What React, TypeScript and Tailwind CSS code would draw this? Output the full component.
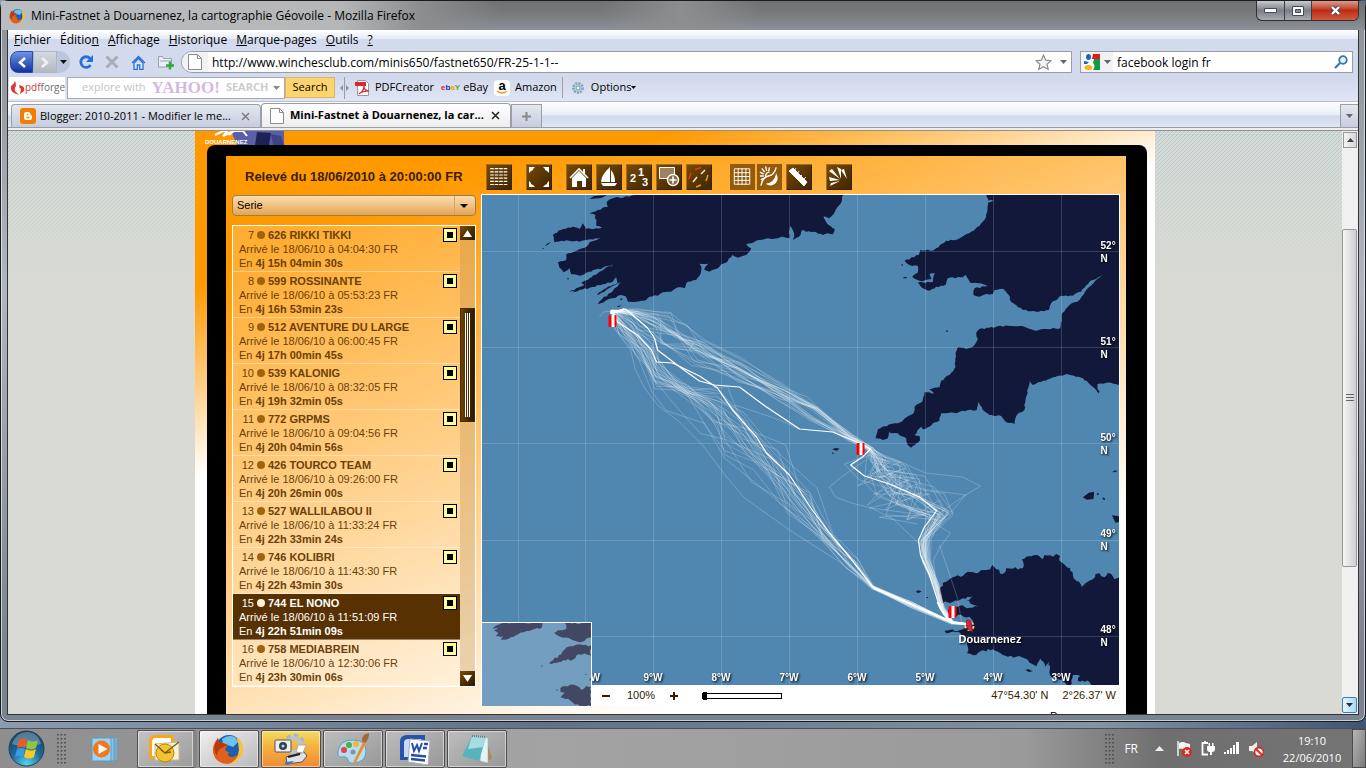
import React from "react";

type Pt = [number, number];

function seeded(seed: number) {
  let s = seed;
  return () => {
    s = (s * 16807) % 2147483647;
    return s / 2147483647 - 0.5;
  };
}

function parse(text: string): Pt[] {
  return text
    .trim()
    .split(/\s+/)
    .map((p) => p.split(",").map(Number) as Pt);
}

/* Breaks every edge of a coast line into small irregular steps. */
function coast(text: string, seed: number, amp = 0.32): string {
  const rnd = seeded(seed);
  const pts = parse(text);
  const out: Pt[] = [];
  pts.forEach((a, i) => {
    const b = pts[(i + 1) % pts.length];
    const len = Math.hypot(b[0] - a[0], b[1] - a[1]);
    out.push(a);
    if (len > 200) return;
    const n = Math.max(1, Math.floor(len / 7));
    for (let k = 1; k < n; k++) {
      const t = k / n;
      const d = rnd() * Math.min(len, 22) * amp;
      out.push([
        a[0] + (b[0] - a[0]) * t - ((b[1] - a[1]) / len) * d,
        a[1] + (b[1] - a[1]) * t + ((b[0] - a[0]) / len) * d,
      ]);
    }
  });
  return out.map((p) => p[0].toFixed(1) + "," + p[1].toFixed(1)).join(" ");
}

const IRELAND = coast(
  "520,110 1120,110 1118,135 1105,155 1092,178 1078,190 1062,184 1072,205 1096,222 1090,238 1075,235 1060,240 1040,232 1010,230 1000,224 988,245 970,255 974,235 962,212 960,250 940,245 925,250 895,250 870,255 845,265 830,268 845,280 830,300 805,308 788,300 775,318 755,328 745,340 720,350 704,344 716,326 690,326 696,336 694,355 680,375 655,380 645,400 625,397 605,410 580,412 565,422 540,425 530,435 500,440 475,440 468,424 455,420 430,430 410,436 385,448 398,432 430,408 455,382 438,390 405,410 382,420 410,400 444,384 440,366 430,380 400,388 360,398 325,408 300,411 320,400 345,390 335,383 355,375 390,350 432,328 400,338 365,350 330,362 305,358 300,340 282,352 270,338 265,322 290,315 290,298 320,288 345,278 360,262 392,248 350,255 330,260 290,256 255,262 250,240 275,225 310,215 330,222 340,205 350,222 380,220 398,218 380,212 378,180 360,175 385,165 415,155 412,140 430,130 480,125",
  7,
  0.22,
);
const BRITAIN = coast(
  "435,36 447,62 468,60 446,68 440,110 420,138 395,155 355,178 320,182 290,205 280,212 243,210 238,225 195,242 210,255 235,258 235,278 218,290 240,302 276,298 270,282 286,280 280,306 235,308 250,325 270,332 290,320 318,315 325,295 370,292 378,284 392,308 430,312 445,318 405,325 402,345 420,350 440,342 460,342 465,330 490,326 508,345 515,365 530,375 550,390 590,395 628,390 635,370 665,347 700,347 725,335 750,305 788,285 770,300 740,330 720,360 690,375 668,400 662,445 620,447 590,452 555,440 505,437 470,440 420,447 410,460 415,478 400,500 380,507 355,502 348,520 348,560 330,585 305,602 300,622 270,628 284,640 255,637 248,665 225,680 222,700 175,730 155,732 115,748 108,775 130,780 145,775 148,757 175,760 200,775 205,795 215,803 242,780 240,768 225,765 245,740 250,748 300,722 305,700 355,698 385,690 412,690 418,665 430,690 450,705 485,708 500,727 525,732 532,705 555,690 558,660 566,625 570,602 580,615 605,605 640,592 682,582 730,595 775,632 774,612 800,608 850,615 850,36",
  11,
  0.2,
);
const BRITTANY = coast(
  "880,400 855,418 845,402 835,398 825,412 810,400 798,402 790,418 775,425 757,440 740,422 730,405 722,385 700,370 690,362 692,348 680,342 670,350 645,345 640,358 620,345 590,350 577,358 580,385 550,386 530,385 520,402 500,388 488,375 482,388 462,390 440,400 415,395 400,408 370,412 340,428 330,450 332,488 370,485 400,475 430,468 410,482 446,500 420,503 400,496 375,505 355,510 362,532 386,524 420,530 432,545 400,568 345,572 350,580 385,575 405,590 415,620 413,640 440,645 455,632 490,628 520,645 560,650 585,655 600,668 622,678 632,655 648,680 660,665 665,710 700,722 722,738 730,705 752,708 745,722 780,726 800,742 880,742",
  23,
  0.4,
);

const LEAD_TRACKS = [
  "965,623 953,623 942,610 938,600 930,575 921,555 919,540 925,527 937,511 920,497 890,484 865,476 851,465 863,457 871,449 855,441 833,432 800,429 767,407 740,387 715,385 700,381 683,369 658,350 655,338 648,328 633,315 626,309 613,312",
  "613,312 618,322 638,335 652,350 657,362 673,363 700,376 718,388 733,410 757,437 767,453 790,475 812,509 830,533 850,557 873,587 913,605 953,623 967,624",
];

const STRAY_TRACKS = [
  "613,325 618,333 631,350 636,370 645,388 658,405 680,422 703,445 727,477 745,498 790,530 840,562 873,588 912,607",
  "872,450 897,460 926,473 963,477 981,486 963,497 940,513 926,530 921,556 939,600",
  "866,460 842,477 830,487 836,497 852,503 872,508 895,520 921,545",
  "872,450 886,470 902,485 930,490 966,495 950,514 932,527 923,545 936,590",
  "868,456 845,464 860,480 888,488 912,500 930,520 951,533 940,548 934,560 937,590",
  "870,452 901,462 867,476 914,478 874,494 930,494 870,508 925,515 880,517 918,524",
  "868,455 890,462 858,486 900,470 868,505 907,480 886,510 922,492 907,520 941,508",
  "872,450 880,478 906,468 890,496 917,484 908,520 940,500 948,514 922,540",
  "735,405 757,412 780,420 800,429",
  "600,317 604,312 612,311 622,312",
  "613,312 640,312 660,320 682,333 694,343 690,350",
  "690,348 735,367 790,390 808,397 830,420 850,436 871,446",
  "940,545 958,598 962,622",
];

type Way = [number, number, number, number];
const OUT: Way[] = [
  [966, 624, 1, 1], [953, 622, 2, 2], [943, 608, 3, 4], [937, 585, 5, 3], [926, 560, 9, 4],
  [925, 540, 12, 6], [941, 515, 26, 10], [915, 500, 60, 26], [900, 487, 60, 26], [886, 473, 46, 20],
  [878, 460, 22, 8], [871, 449, 6, 3], [850, 437, 4, 6], [815, 412, 12, 16], [780, 392, 12, 20], [740, 371, 12, 22],
  [700, 352, 14, 24], [676, 337, 44, 26], [652, 322, 40, 20], [632, 313, 18, 8], [614, 311, 2, 2],
];
const BACK: Way[] = [
  [613, 311, 2, 2], [626, 328, 18, 12], [645, 350, 24, 12], [657, 375, 14, 28], [682, 390, 30, 36],
  [716, 408, 32, 44], [740, 436, 32, 38], [768, 465, 38, 32], [800, 502, 36, 24], [828, 537, 22, 16],
  [852, 563, 14, 12], [873, 587, 3, 3], [912, 605, 5, 5], [953, 623, 3, 2], [967, 624, 1, 1],
];

function track(way: Way[], seed: number): string {
  const rnd = seeded(seed);
  rnd();
  const side = rnd();
  return way
    .map(([x, y, sx, sy]) => {
      const j = side * 0.6;
      const px = x + (j + rnd() * 0.6) * sx;
      const py = y + (-j + rnd() * 0.7) * sy;
      return px.toFixed(1) + "," + py.toFixed(1);
    })
    .join(" ");
}

const FAINT = Array.from({ length: 27 }, (_, i) => [
  track(OUT, 991 + i * 7717),
  track(BACK, 131 + i * 9173),
]).flat();

const MERIDIANS = [518, 585, 653, 721, 789, 857, 925, 993, 1061];
const PARALLELS = [251, 347, 443, 540, 636];

function Buoy({ x, y }: { x: number; y: number }) {
  return (
    <g>
      <rect x={x} y={y} width="8" height="12" rx="1" fill="#f00" />
      <rect x={x + 3} y={y} width="3" height="12" fill="#fff" />
    </g>
  );
}

function SeaMap() {
  return (
    <svg
      viewBox="482 195 638 490"
      preserveAspectRatio="xMidYMid slice"
      className="block h-[490px] w-full bg-[#5087b0]"
      role="img"
      aria-label="Carte de la course"
    >
      <g fill="#12183a">
        <g transform="translate(470 155) scale(.33333)">
          <polygon points={IRELAND} />
          <path d="M360 132l14-9 38-3-16 9zM226 272l10-8 8-2-10 8zM219 280h4v2h-4zM293 370h5v3h-5zM442 455l14-6-8 8zM450 432l8-2v6z" />
        </g>
        <g transform="translate(840 180) scale(.33333)">
          <polygon points={BRITAIN} />
          <path d="M-10 36h20l-5 32-15 12zM186 253h4v4h-4zM192 291h10v4h-10zM321 448l5 8h-5zM770 628l10 4-2 8-6-6z" />
        </g>
        <g transform="translate(830 440) scale(.33333)">
          <polygon points={BRITTANY} />
          <path d="M760 172l18-14 16-3-2 22-20 2zM802 160h6v4h-6zM820 172l7 4-2 5-6-4zM847 226l25 3v16l-14 3zM848 96l10-5 6 3-10 3zM588 690l8-3 14 7-12 2zM258 456l8-5 10 3-8 5zM291 471h4v3h-4zM8 28l10-4 12 2-8 6zM10 36l4 5h-6z" />
        </g>
      </g>
      <g stroke="#fff" strokeOpacity=".16" shapeRendering="crispEdges">
        {MERIDIANS.map((x) => (
          <line key={x} x1={x + 0.5} x2={x + 0.5} y1="195" y2="685" />
        ))}
        {PARALLELS.map((y) => (
          <line key={y} x1="482" x2="1120" y1={y + 0.5} y2={y + 0.5} />
        ))}
      </g>
      <g fill="none" stroke="#fff" strokeLinejoin="round">
        <g strokeOpacity=".22">
          {FAINT.map((p, i) => (
            <polyline key={i} points={p} />
          ))}
          {STRAY_TRACKS.map((p, i) => (
            <polyline key={i} points={p} />
          ))}
        </g>
        {LEAD_TRACKS.map((p) => (
          <polyline key={p} points={p} strokeWidth="1.2" />
        ))}
        <path d="M612 312l8-1 5-2M938 602q6 14 14 20M874 588l40 17 40 18 14 1" strokeWidth="2" />
      </g>
      <circle cx="613" cy="312" r="2.5" fill="#fff" />
      <Buoy x={609} y={315} />
      <Buoy x={857} y={443} />
      <Buoy x={949} y={606} />
      <circle cx="970" cy="626" r="4" fill="none" stroke="#f3d979" strokeWidth="2" strokeDasharray="3 2" />
      <path d="M967 620q4-1 5 3l1 9-4-2q-3-5-2-10z" fill="#cf2840" stroke="#8a1528" strokeWidth=".5" />
      <g
        className="font-['Liberation_Sans',sans-serif] text-[11px] font-bold"
        fill="#fff"
        style={{ filter: "drop-shadow(1px 1px 1px #000)" }}
      >
        {[52, 51, 50, 49, 48].map((n, i) => (
          <text key={n} className="text-[10px]">
            <tspan x="1101" y={249 + i * 96}>{n}°</tspan>
            <tspan x="1101" y={262 + i * 96}>N</tspan>
          </text>
        ))}
        {["10°W", "9°W", "8°W", "7°W", "6°W", "5°W", "4°W", "3°W"].map((l, i) => (
          <text key={l} x={576 + i * 68} y="681" className="text-[10px]">
            {l}
          </text>
        ))}
        <text x="959" y="643">Douarnenez</text>
      </g>
    </svg>
  );
}

function MiniMap() {
  return (
    <svg
      viewBox="876 188 328 250"
      preserveAspectRatio="none"
      className="absolute bottom-0 left-px block h-[84px] w-[110px] border-t border-r border-white bg-[#739ebf]"
      aria-hidden="true"
    >
      <g fill="#424764">
        <polygon points={coast("938,188 1058,188 1056,202 1035,206 1010,212 985,222 950,238 932,238 940,228 918,228 925,218 912,210 925,202 908,205 920,195", 5, 0.2)} />
        <polygon points={coast("1126,188 1204,188 1204,232 1190,235 1170,246 1150,240 1130,232 1108,228 1093,218 1105,210 1130,205", 9, 0.3)} />
        <polygon points={coast("1204,256 1180,254 1150,258 1130,262 1115,282 1090,300 1078,310 1100,308 1120,300 1150,298 1165,282 1185,280 1204,286", 13, 0.3)} />
        <polygon points={coast("1204,380 1190,378 1175,390 1160,376 1140,374 1112,384 1112,396 1125,398 1112,412 1135,416 1150,428 1170,438 1204,438", 17, 0.3)} />
        <path d="M1054 316h4v3h-4zM1100 388h4v3h-4zM1186 342h5v3h-5zM1200 355h4v6h-4z" />
      </g>
    </svg>
  );
}

const ICONS: { name: string; gap: string; flat?: boolean; art: React.ReactNode }[] = [
  {
    name: "Classement", gap: "",
    art: <path d="M6 4v17M10.500 4v17M15 4v17M19.500 4v17" stroke="#fff" strokeWidth="3.600" strokeDasharray="1.200 2" />,
  },
  {
    name: "Plein écran", gap: "ml-3.5",
    art: <path d="M3 3h6L7 5v1L5 7 3 9zM23 3h-6l2 2v1l2 1 2 2zM3 23v-6l2 2v1l2 1 2 2zM23 23v-6l-2 2v1l-2 1-2 2z" fill="#fff" />,
  },
  {
    name: "Accueil", gap: "ml-3.5",
    art: (
      <g>
        <path d="M17 5h2v5h-2z" fill="#fff" />
        <path d="M4 14l9-9 9 9" fill="none" stroke="#fff" strokeWidth="1.6" />
        <path d="M6 14l7-7 7 7v9h-4v-6h-5v6H6z" fill="#fff" />
      </g>
    ),
  },
  {
    name: "Bateaux", gap: "ml-1",
    art: <path d="M14 3q-9 8-9 15h9zM15 6v12h4q0-7-4-12zM5 19h16l-2 3H7z" fill="#fff" />,
  },
  {
    name: "Numéros", gap: "ml-1",
    art: (
      <g fill="#fff" className="font-['Liberation_Sans',sans-serif] text-[11px] font-bold">
        <text x="4" y="18">2</text>
        <text x="12" y="12">1</text>
        <text x="16" y="22">3</text>
      </g>
    ),
  },
  {
    name: "Zoom sur zone", gap: "ml-1",
    art: (
      <g stroke="#fff">
        <path d="M3.500 3.500h15v11h-15z" fill="#9c8162" />
        <circle cx="17" cy="16" r="5.500" fill="#8a6d48" strokeWidth="1.400" />
        <path d="M17 12.500v7M13.500 16h7" strokeWidth="1.600" />
      </g>
    ),
  },
  {
    name: "Traces", gap: "ml-1",
    art: (
      <g strokeWidth="1.500" fill="none">
        <path d="M9 5.500l6-2M3 15l2-6" stroke="#e4391a" />
        <path d="M7 18l4-5M15 10l4-4" stroke="#f0e8dc" />
        <path d="M20 17l2-6M10 23l5-2" stroke="#d9a51e" />
      </g>
    ),
  },
  {
    name: "Grille", gap: "ml-[18px]", flat: true,
    art: <path d="M4.500 4.500h16v16h-16zM8.500 4v17M12.500 4v17M16.500 4v17M4 8.500h17M4 12.500h17M4 16.500h17" fill="none" stroke="#fff" />,
  },
  {
    name: "Jour et nuit", gap: "ml-0.5", flat: true,
    art: (
      <g stroke="#fff" fill="none" strokeWidth="1.400">
        <path d="M20 3q-2 8-8 9T4 22" />
        <path d="M9 13a4 4 0 0 1 4-5M3 8l4 2M5 4l3 4M9 2l1 5M3 12h4M13 3l-1 4M4 16l3-2" />
        <path d="M20 9q4 8-3 12-4 2-8-1 9-1 11-11z" fill="#fff" stroke="none" />
      </g>
    ),
  },
  {
    name: "Mesure", gap: "ml-1",
    art: <path d="M3 7l4-3 14 14-3 4zM8 7l2-3M11 10l2-3M14 13l2-2M17 16l3-3" fill="#fff" stroke="#fff" strokeWidth=".9" />,
  },
  {
    name: "Vent", gap: "ml-3.5",
    art: <path d="M11 3l4 2v10zM3 7l3-2 8 10zM3 13l11 3-10 1zM18 5l3 10-6-9zM4 22l10-5-9 2z" fill="#fff" />,
  },
];

const BOATS = [
  ["7", "626 RIKKI TIKKI", "04:04:30", "4j 15h 04min 30s"],
  ["8", "599 ROSSINANTE", "05:53:23", "4j 16h 53min 23s"],
  ["9", "512 AVENTURE DU LARGE", "06:00:45", "4j 17h 00min 45s"],
  ["10", "539 KALONIG", "08:32:05", "4j 19h 32min 05s"],
  ["11", "772 GRPMS", "09:04:56", "4j 20h 04min 56s"],
  ["12", "426 TOURCO TEAM", "09:26:00", "4j 20h 26min 00s"],
  ["13", "527 WALLILABOU II", "11:33:24", "4j 22h 33min 24s"],
  ["14", "746 KOLIBRI", "11:43:30", "4j 22h 43min 30s"],
  ["15", "744 EL NONO", "11:51:09", "4j 22h 51min 09s"],
  ["16", "758 MEDIABREIN", "12:30:06", "4j 23h 30min 06s"],
];

function BoatList() {
  return (
    <div className="mt-[9px] flex h-[462px] overflow-hidden border border-white bg-white/20">
      <ul className="flex-1 overflow-hidden">
        {BOATS.map(([rank, name, time, total]) => {
          const on = rank === "15";
          return (
            <li
              key={rank}
              className={
                on
                  ? "flex h-[46px] border-b border-white/40 bg-[#583103] pt-0.5 text-white"
                  : "flex h-[46px] border-b border-white/40 pt-0.5 text-[#6b3f08]"
              }
            >
              <label htmlFor={"boat" + rank} className="flex-1 text-[11px] leading-[14px]">
                <span className="flex items-center">
                  <span className="w-[21px] text-right">{rank}</span>
                  <i className={on ? "mx-[3px] size-2 rounded-full bg-[#fff0da]" : "mx-[3px] size-2 rounded-full bg-[#a0620c]"} />
                  <b>{name}</b>
                </span>
                <span className="block pl-1.5">Arrivé le 18/06/10 à {time} FR</span>
                <span className="block pl-1.5">
                  En <b>{total}</b>
                </span>
              </label>
              <input
                id={"boat" + rank}
                type="checkbox"
                defaultChecked
                className="mr-[3px] size-3.5 appearance-none border border-black bg-[#ffff99] bg-[linear-gradient(#000,#000)] bg-[length:6px_6px] bg-center bg-no-repeat"
              />
            </li>
          );
        })}
      </ul>
      <div className="flex w-[15px] flex-col bg-[#b98b4c]/30">
        <button aria-label="Monter" className="flex h-3.5 items-center justify-center bg-linear-to-br from-[#7c4c08] to-[#2c1800]">
          <svg width="9" height="7"><path d="M4.500 0L9 7H0z" fill="#fff" /></svg>
        </button>
        <div className="mt-[68px] flex h-[114px] justify-center gap-px border border-[#4a2b00] bg-linear-to-r from-[#6e4300] to-[#2c1800] py-1">
          <i className="w-px bg-white" />
          <i className="w-px bg-white" />
          <i className="w-px bg-white" />
        </div>
        <button aria-label="Descendre" className="mt-auto flex h-[15px] items-center justify-center bg-linear-to-br from-[#7c4c08] to-[#2c1800]">
          <svg width="9" height="7"><path d="M4.500 7L9 0H0z" fill="#fff" /></svg>
        </button>
      </div>
    </div>
  );
}

function Viewer() {
  return (
    <div className="min-h-[600px] bg-[linear-gradient(158deg,#ff9900_102px,#fff_680px)] px-1.5 pt-2 font-['Liberation_Sans',sans-serif]">
      <div className="flex">
        <div className="flex w-[244px] flex-none flex-col">
          <h1 className="h-[31px] pt-1 pl-[13px] text-[13px] leading-[18px] font-bold whitespace-nowrap text-[#3a2000]">
            Relevé du 18/06/2010 à 20:00:00 FR
          </h1>
          <div className="relative flex">
            <select
              aria-label="Classe"
              defaultValue="Serie"
              className="h-[21px] w-full appearance-none rounded-sm border border-[#9a7d55] bg-linear-to-b from-[#fbdcb0] to-[#e5a550] px-1 text-[11px] text-black"
            >
              <option>Serie</option>
            </select>
            <span className="pointer-events-none absolute inset-y-px right-1 flex w-[18px] items-center justify-center border-l border-[#c9a878]">
              <svg width="8" height="4"><path d="M0 0h8L4 4z" /></svg>
            </span>
          </div>
          <BoatList />
        </div>
        <div className="ml-[5px] flex min-w-0 flex-1 flex-col">
          <div className="flex h-[30px] items-start pl-[5px]">
            {ICONS.map((ic) => (
              <button key={ic.name} aria-label={ic.name} className={ic.gap}>
                <svg
                  width={ic.flat ? 25 : 26}
                  height="26"
                  viewBox="0 0 26 26"
                  className={
                    ic.flat
                      ? "block bg-[#925a0a]"
                      : "block bg-linear-to-br from-[#7b4c07] to-[#3d2400] shadow-[inset_1px_1px_#a26c1d,inset_-1px_-1px_#3b2200]"
                  }
                >
                  {ic.art}
                </svg>
              </button>
            ))}
          </div>
          <div className="relative">
            <div className="border border-b-0 border-white">
              <SeaMap />
            </div>
            <MiniMap />
            <div className="flex h-[21px] items-center bg-white pr-1 pl-[121px] text-[11px] text-[#331c00]">
              <button aria-label="Dézoomer" className="h-0.5 w-2 bg-[#331c00]" />
              <span className="ml-[17px] w-8">100%</span>
              <button aria-label="Zoomer" className="ml-[11px]">
                <svg width="8" height="8"><path d="M0 4h8M4 0v8" stroke="#331c00" strokeWidth="2" /></svg>
              </button>
              <input
                type="range"
                aria-label="Niveau de zoom"
                defaultValue={0}
                className="ml-6 h-1.5 w-20 appearance-none border border-black bg-white [&::-webkit-slider-thumb]:h-2 [&::-webkit-slider-thumb]:w-1 [&::-webkit-slider-thumb]:appearance-none [&::-webkit-slider-thumb]:bg-black"
              />
              <span className="ml-auto">47°54.30&apos; N</span>
              <span className="ml-3.5">2°26.37&apos; W</span>
            </div>
          </div>
          <p className="pt-0.5 pl-[569px] text-[11px] text-black">P</p>
        </div>
      </div>
    </div>
  );
}

function Page() {
  return (
    <main className="flex-1 overflow-hidden bg-[#d8dad3] bg-[linear-gradient(to_bottom,transparent,#d8dad3_150px),linear-gradient(135deg,#b9c4c2_12.5%,#d3dbd9_12.5%,#d3dbd9_50%,#b9c4c2_50%,#b9c4c2_62.5%,#d3dbd9_62.5%)] bg-[length:100%_100%,4px_4px]">
      <div className="mx-auto w-[960px] max-w-full bg-[linear-gradient(162deg,#ff9900_149px,#fff_330px)]">
        <svg width="90" height="14" viewBox="0 0 90 14" className="block" aria-hidden="true">
          <path d="M36 0h53v14H42z" fill="#5a5fa8" />
          <path d="M62 1l14 1-2 12H60z" fill="#1d2354" />
          <path d="M76 3l10 2 3 9H78z" fill="#3d4388" />
          <path d="M20 4l8-4h4l-4 5 10-5h10l4 5M34 4l5-4" stroke="#fff" strokeWidth="2" fill="none" />
          <text x="10" y="13" fill="#fff" className="font-['Liberation_Sans',sans-serif] text-[6px] font-bold">DOUARNENEZ</text>
        </svg>
        <div className="mr-2 ml-3 rounded-t-lg bg-black pt-[11px] pr-[21px] pl-[19px]">
          <Viewer />
        </div>
      </div>
    </main>
  );
}

function Firefox({ size }: { size: number }) {
  return (
    <svg width={size} height={size} viewBox="0 0 32 32" aria-hidden="true" className="flex-none">
      <circle cx="17" cy="15" r="13" fill="#1d5fae" />
      <path d="M10 6q6-5 13-2l3 5-5 5-5-2-4 3z" fill="#6fc1ee" />
      <path d="M24 4q9 6 7 15-3 10-14 12 9-5 10-14 0-7-3-13z" fill="#f8c33a" />
      <path d="M27 20q-3 9-11 11Q4 31 1 20 0 11 6 5l1 4 4 1 5 2-3 4q0 2 4 3-3 4 2 5 6 0 8-4z" fill="#e0601a" />
      <path d="M6 5l1 4 4 1 5 2-4 2q-7 2-7 9-5-7-1-14z" fill="#b83a12" />
    </svg>
  );
}

function Doc() {
  return (
    <svg width="14" height="16" viewBox="0 0 14 16" aria-hidden="true" className="flex-none">
      <path d="M.5.5h9l4 4v11H.5zM9.500.500v4h4" fill="#fdfdfd" stroke="#8d8d8d" />
    </svg>
  );
}

function Caret({ color = "#666" }: { color?: string }) {
  return (
    <svg width="7" height="4" aria-hidden="true" className="flex-none">
      <path d="M0 0h7L3.500 4z" fill={color} />
    </svg>
  );
}

function TitleBar() {
  return (
    <header className="flex h-[29px] items-start bg-linear-to-b from-[#6f7072] via-[#7b7c7d] to-[#8a929b]">
      <div className="flex h-full min-w-0 flex-1 items-center gap-1.5 bg-[linear-gradient(90deg,#b9bdc1_0,#b5b6b7_340px,#8c8d8e_420px,transparent_500px,transparent_600px,#8d8e8f_680px,transparent_760px)] pl-2">
        <Firefox size={16} />
        <span className="whitespace-nowrap text-[12px]">Mini-Fastnet à Douarnenez, la cartographie Géovoile - Mozilla Firefox</span>
      </div>
      <div className="mr-1.5 flex h-5 overflow-hidden rounded-b-md border border-t-0 border-[#2c2f33] bg-linear-to-b from-[#c9cbcd] via-[#7c8086] to-[#a9adb2]">
        <button aria-label="Réduire" className="flex w-7 items-center justify-center border-r border-[#3c3f43]">
          <svg width="13" height="6"><path d="M.5.5h12v4H.5z" fill="#fff" stroke="#444a5c" /></svg>
        </button>
        <button aria-label="Agrandir" className="flex w-[27px] items-center justify-center border-r border-[#3c3f43]">
          <svg width="12" height="10"><path d="M.5.5h11v9H.5z" fill="#fff" stroke="#444a5c" /><path d="M3.500 3.500h5v3h-5z" fill="#8b8e93" stroke="#444a5c" /></svg>
        </button>
        <button aria-label="Fermer" className="flex w-[46px] items-center justify-center bg-linear-to-b from-[#d99a8c] via-[#bb2c12] to-[#d2593e]">
          <svg width="13" height="11" viewBox="0 0 13 11"><path d="M3 2l7 7M10 2l-7 7" stroke="#444a5c" strokeWidth="4.500" /><path d="M3 2l7 7M10 2l-7 7" stroke="#fff" strokeWidth="2.400" /></svg>
        </button>
      </div>
    </header>
  );
}

const MENUS = [["", "F", "ichier"], ["Éditio", "n", ""], ["", "A", "ffichage"], ["", "H", "istorique"], ["", "M", "arque-pages"], ["", "O", "utils"], ["", "?", ""]];

function Chrome() {
  return (
    <div className="text-[12px]">
      <div className="bg-[linear-gradient(#fff_0,#e3ebf7_9px,#d3daed_9px,#d3daed_50px,#e0e6f5_72px)]">
        <nav className="flex h-5 items-center gap-[9px] pl-1.5">
          {MENUS.map(([a, k, b]) => (
            <a key={a + k} href="#menu" className="whitespace-nowrap">
              {a}<u>{k}</u>{b}
            </a>
          ))}
        </nav>
        <div className="flex h-6 items-center">
          <div className="ml-0.5 flex h-[22px] items-center rounded-l-xl rounded-r-xl bg-[#bcc5dc]">
            <button aria-label="Précédent" className="flex h-[22px] w-[23px] items-center justify-center rounded-l-lg border border-[#2a4da8] bg-linear-to-b from-[#6f92e6] to-[#1233a0]">
              <svg width="10" height="11"><path d="M8 1L3 5.500 8 10" stroke="#fff" strokeWidth="2.500" fill="none" /></svg>
            </button>
            <button aria-label="Suivant" className="flex h-[22px] w-6 items-center justify-center border border-[#b0b5c2] bg-linear-to-b from-[#d6d9e0] to-[#b4b8c2]">
              <svg width="10" height="11"><path d="M2 1l5 4.500L2 10" stroke="#eef0f4" strokeWidth="2.500" fill="none" /></svg>
            </button>
            <button aria-label="Pages récentes" className="px-[3px]"><Caret color="#111" /></button>
          </div>
          <button aria-label="Actualiser" className="ml-2">
            <svg width="16" height="16" viewBox="0 0 16 16"><path d="M12.500 11A5.300 5.300 0 1 1 12 4.500" fill="none" stroke="#2372dc" strokeWidth="2.800" /><path d="M15 1v7H8z" fill="#2372dc" /></svg>
          </button>
          <button aria-label="Arrêter" className="ml-[11px]">
            <svg width="14" height="14"><path d="M1.500 1.500l11 11M12.500 1.500l-11 11" stroke="#a9adb6" strokeWidth="3" /></svg>
          </button>
          <button aria-label="Accueil" className="ml-3">
            <svg width="15" height="15" viewBox="0 0 15 15"><path d="M1 8l6.500-6.500L14 8M3 8v6.300h3.300V10h2.500v4.300H12V8L7.500 3.500z" fill="#dce9fb" stroke="#2c6fd6" strokeWidth="1.300" /></svg>
          </button>
          <button aria-label="Nouvel onglet" className="ml-[11px]">
            <svg width="17" height="16" viewBox="0 0 17 16"><path d="M1.500 13V2.500h4l1 2h8V13z" fill="#e9eef8" stroke="#98a1b4" /><path d="M3 7h11" stroke="#98a1b4" /><path d="M9 11.500h8M13 7.500v8" stroke="#35a83a" strokeWidth="2.400" /></svg>
          </button>
          <div className="ml-[7px] flex h-[22px] flex-1 items-center rounded-l-xl border border-[#9a9da3] bg-white">
            <span className="flex h-full w-[26px] items-center justify-end rounded-l-xl bg-[#f1f2f4] pr-1.5"><Doc /></span>
            <input aria-label="Adresse" defaultValue="http://www.winchesclub.com/minis650/fastnet650/FR-25-1-1--" className="ml-1 h-full min-w-0 flex-1 outline-none" />
            <button aria-label="Marquer cette page">
              <svg width="17" height="17" viewBox="0 0 17 17"><path d="M8.500 1.300l2.200 4.900 5.300.5-4 3.500 1.200 5.200-4.700-2.700-4.700 2.700L5 10.200 1 6.700l5.300-.5z" fill="#f4f4f4" stroke="#8b8b8b" strokeWidth="1.200" /></svg>
            </button>
            <button aria-label="Historique des adresses" className="mr-1 ml-2"><Caret /></button>
          </div>
          <div className="mr-[5px] ml-2 flex h-[22px] w-[273px] items-center border border-[#9a9da3] bg-white">
            <button aria-label="Moteur de recherche" className="flex h-full w-8 items-center gap-1 bg-[#f1f2f4] pl-[3px]">
              <svg width="16" height="16" viewBox="0 0 16 16" className="flex-none"><path d="M0 0h16v16H0z" fill="#fff" /><path d="M9 0h7v5H8z" fill="#e9161c" /><path d="M10 5h6v11H9q3-4 0-7z" fill="#0f9a48" /><ellipse cx="4.500" cy="3" rx="2.500" ry="3" fill="#1763c6" /><path d="M0 7l5 1-2 2H0z" fill="#1763c6" /><ellipse cx="4.500" cy="13.500" rx="4" ry="2.500" fill="#f5b51b" /></svg>
              <Caret />
            </button>
            <input aria-label="Rechercher" defaultValue="facebook login fr" className="ml-1 h-full min-w-0 flex-1 outline-none" />
            <button aria-label="Lancer la recherche" className="mr-1">
              <svg width="14" height="14"><circle cx="9" cy="5" r="3.800" fill="#e7f2fb" stroke="#3475b5" strokeWidth="1.800" /><path d="M6 8l-5 5" stroke="#3475b5" strokeWidth="2.200" /></svg>
            </button>
          </div>
        </div>
        <div className="flex h-[28px] items-center border-b border-[#b9bdc9] text-[11px]">
          <span className="ml-[1px] flex h-[22px] w-[56px] flex-none items-center overflow-hidden bg-white pl-px text-[10px] text-[#6d6e70]">
            <svg width="15" height="16" viewBox="0 0 15 16" className="flex-none"><path d="M5 1q-1 3-4 5-1 5 3 7l5 2-4-4q-1-3 1-5 0-3-1-5zM9 5q0 3 2 4l-1 5 4-3q1-4-2-5z" fill="#dd3a34" /></svg>
            <b className="font-normal text-[#c5403c]">pdf</b>forge
          </span>
          <label className="ml-0.5 flex h-[22px] w-[218px] items-center border border-[#a6a9b0] bg-white text-[#c4c4c4]">
            <span className="ml-3.5 whitespace-nowrap">explore with</span>
            <b className="ml-1.5 font-['Liberation_Serif',serif] text-[17px] text-[#d3b9de]">YAHOO!</b>
            <b className="ml-1.5 text-[#cccccc]">SEARCH</b>
            <input aria-label="Recherche Yahoo" className="w-0 flex-1 outline-none" />
            <span className="mr-1"><Caret color="#888" /></span>
          </label>
          <button className="h-[21px] w-[50px] border border-[#d9b75c] bg-[#fcd46f]">Search</button>
          <svg width="9" height="22" className="ml-[5px]"><path d="M4.500 0v22" stroke="#999ca6" /><path d="M3 8v6L0 11zM6 8v6l3-3z" fill="#8a8d96" /></svg>
          <svg width="16" height="16" viewBox="0 0 16 16" className="ml-1.5"><path d="M2.500.500h8l3 3v12h-11z" fill="#fff" stroke="#999" /><path d="M0 2h11v4H0z" fill="#e0252a" /><path d="M4 14q5-3 5-8 0 5 5 5-7 0-10 3z" fill="none" stroke="#d62125" strokeWidth="1.200" /></svg>
          <a href="#pdf" className="ml-1">PDFCreator</a>
          <span className="ml-[7px] font-['Liberation_Sans',sans-serif] text-[8px] leading-none font-bold"><i className="not-italic text-[#e4191e]">e</i><i className="not-italic text-[#1b32b8]">b</i><i className="not-italic text-[#e0b000]">a</i><i className="not-italic text-[#62a80e]">Y</i></span>
          <a href="#ebay" className="ml-[3px]">eBay</a>
          <span className="ml-1.5 flex size-4 flex-col items-center rounded-sm bg-white font-['Liberation_Sans',sans-serif] text-[13px] leading-[11px] font-black">
            a
            <svg width="12" height="4"><path d="M1 0q5 4 10 0" fill="none" stroke="#f29a1f" strokeWidth="1.500" /></svg>
          </span>
          <a href="#amazon" className="ml-[5px]">Amazon</a>
          <i className="ml-[5px] h-[21px] w-px bg-[#9da1ad]" />
          <svg width="14" height="14" viewBox="0 0 14 14" className="ml-2"><circle cx="7" cy="7" r="4.500" fill="#c5dbe8" stroke="#87a9bf" strokeWidth="3" strokeDasharray="2 1" /><circle cx="7" cy="7" r="2" fill="#eef6fa" stroke="#7797ad" /></svg>
          <button className="ml-1.5 flex items-center">Options<svg width="5" height="3"><path d="M0 0h5L2.500 3z" /></svg></button>
        </div>
      </div>
      <div className="flex h-[26px] items-end border-b border-[#9b9ea4] bg-[linear-gradient(#fff_0,#e8edf8_13px,#d0d8ed_14px,#e2e8f4_26px)] pl-[3px] text-[11px]" role="tablist">
        <button role="tab" aria-selected="false" className="flex h-[23px] w-[250px] items-center rounded-t-sm border border-b-0 border-[#9b9ea4] bg-linear-to-b from-[#e3e7f1] to-[#c6cde0] pl-2">
          <svg width="16" height="16" viewBox="0 0 16 16" className="flex-none"><rect width="16" height="16" rx="3" fill="#f57d00" /><path d="M6.500 4h2q2 0 2 2.500 0 1 1.500 1v2q0 2.500-2.500 2.500h-3Q4 12 4 9.500v-3Q4 4 6.500 4z" fill="#fff" /><path d="M6.500 6.500H8M6.500 9.500h3" stroke="#f57d00" strokeWidth="1.300" /></svg>
          <span className="ml-1 flex-1 text-left whitespace-nowrap">Blogger: 2010-2011 - Modifier le me...</span>
          <svg width="9" height="9" className="mr-2.5 flex-none"><path d="M1 1l7 7M8 1L1 8" stroke="#777" strokeWidth="1.400" /></svg>
        </button>
        <button role="tab" aria-selected="true" className="flex h-6 w-[250px] items-center rounded-t-sm border border-b-0 border-[#9b9ea4] bg-linear-to-b from-white to-[#ededed] pl-2 font-bold">
          <Doc />
          <span className="ml-1.5 flex-1 text-left whitespace-nowrap">Mini-Fastnet à Douarnenez, la car...</span>
          <svg width="9" height="9" className="mr-2.5 flex-none"><path d="M1 1l7 7M8 1L1 8" stroke="#222" strokeWidth="1.500" /></svg>
        </button>
        <button aria-label="Ouvrir un nouvel onglet" className="flex h-[23px] w-[31px] items-center justify-center border border-b-0 border-[#9b9ea4] bg-linear-to-b from-[#e3e7f1] to-[#c6cde0]">
          <svg width="9" height="9"><path d="M0 4.500h9M4.500 0v9" stroke="#888" strokeWidth="2" /></svg>
        </button>
        <button aria-label="Liste des onglets" className="ml-auto flex h-[23px] w-[18px] items-center justify-center border border-r-0 border-b-0 border-[#9b9ea4] bg-linear-to-b from-[#e3e7f1] to-[#c6cde0]"><Caret /></button>
      </div>
      <div className="h-[3px] border-b border-[#8e9094] bg-[#ededed]" />
    </div>
  );
}

function Scrollbar() {
  return (
    <div className="flex w-4 flex-col bg-[#f0f0f0]">
      <button aria-label="Défiler vers le haut" className="m-px flex h-4 items-center justify-center border border-[#979797] bg-linear-to-r from-[#f5f5f5] to-[#d5d5d8]">
        <svg width="7" height="4"><path d="M3.500 0L7 4H0z" fill="#444" /></svg>
      </button>
      <div className="min-h-[80px] flex-1" />
      <div className="flex h-[338px] w-[15px] flex-none flex-col items-center justify-center gap-0.5 rounded-xs border border-[#979797] bg-linear-to-r from-[#f6f6f6] to-[#cfcfd3]">
        <i className="h-px w-2 bg-[#666]" /><i className="h-px w-2 bg-[#666]" /><i className="h-px w-2 bg-[#666]" />
      </div>
      <div className="h-[130px] flex-none" />
      <button aria-label="Défiler vers le bas" className="mb-px flex h-[17px] w-[15px] items-center justify-center rounded-xs border border-[#3c7fb1] bg-linear-to-r from-[#e6f5fd] to-[#a9daf2]">
        <svg width="7" height="4"><path d="M3.500 4L7 0H0z" fill="#234" /></svg>
      </button>
    </div>
  );
}

const TASKS: { name: string; lit: string; art: React.ReactNode }[] = [
  {
    name: "Outlook", lit: "ml-[18px] w-[60px] bg-linear-to-br from-[#c4c4c4] to-[#9b9b9b] border-r-4 border-r-[#858585] pr-1",
    art: <g><path d="M2 26V8q0-6 6-6h19v24z" fill="#f9a61c" /><path d="M5 23V9q0-4 4-4h15v18z" fill="#fff" /><path d="M8 11l24-2v18H8z" fill="#f6f0de" stroke="#c9b98a" /><circle cx="18" cy="20" r="9" fill="#f4c430" stroke="#b98609" /><path d="M8 11l10 9 14-11M18 20l-4-3M18 20l6-1" fill="none" stroke="#7b5a0a" strokeWidth="1.300" /></g>,
  },
  { name: "Firefox", lit: "ml-0.5 w-[60px] bg-linear-to-br from-[#f0f0f0] to-[#b9b9bd]", art: <Firefox size={32} /> },
  {
    name: "Appareil et imprimante", lit: "ml-0.5 w-[60px] bg-[linear-gradient(#f3dc62,#f5b13c_45%,#ee8a3a)]",
    art: <g><circle cx="20" cy="12" r="9" fill="none" stroke="#a9b6c0" strokeWidth="5" strokeDasharray="4 3" /><circle cx="20" cy="12" r="7" fill="none" stroke="#b9c5ce" strokeWidth="4" /><rect x="1" y="7" width="16" height="12" rx="1" fill="#eef0f2" stroke="#555" /><circle cx="9" cy="13" r="4" fill="#36414c" /><circle cx="9" cy="13" r="1.500" fill="#b6dcf3" /><path d="M12 24l18-5 3 4-5 6-15 2z" fill="#dfe3e7" stroke="#555" /><path d="M14 24l12-3" stroke="#222" strokeWidth="2" /><path d="M22 19l2-7h8l-3 8z" fill="#fff" stroke="#aaa" /><path d="M11 29l9-1-3 3-6 1z" fill="#3c7fc0" /></g>,
  },
  {
    name: "Paint", lit: "ml-0.5 w-[60px] bg-linear-to-br from-[#bdbdbd] to-[#989898]",
    art: <g><path d="M2 18Q4 7 17 7t13 11-12 12q-5 1-6-3t-6-3-4-6z" fill="#b8dcf0" stroke="#5c9dc2" /><circle cx="8" cy="17" r="3" fill="#e5443b" /><circle cx="13" cy="12" r="3" fill="#4fae48" /><circle cx="20" cy="11" r="3" fill="#f2b632" /><circle cx="17" cy="19" r="2.500" fill="#7696ad" /><path d="M27 9l3 1-11 21-2-1z" fill="#ee8c2d" /><path d="M26 8q-1-6 7-8 0 7-4 10z" fill="#a8672f" /></g>,
  },
  {
    name: "Word", lit: "ml-0.5 w-[60px] bg-linear-to-br from-[#bdbdbd] to-[#989898]",
    art: <g><path d="M2 27V9q0-7 7-7h18v25z" fill="#2853ad" /><path d="M6 24V10q0-4 4-4h13v18z" fill="#c9daf5" /><path d="M12 6l20 2-2 24-20-3z" fill="#fff" stroke="#aab" /><path d="M14 10l2 8 3-6 2 6 3-8" fill="none" stroke="#2450a8" strokeWidth="2" /><path d="M26 11h4M25 15h4M13 22l15 1.500M13 26l14 1.500" stroke="#2450a8" strokeWidth="2.300" /></g>,
  },
  {
    name: "Bloc-notes", lit: "ml-0.5 w-[60px] bg-linear-to-br from-[#bdbdbd] to-[#989898]",
    art: <g><path d="M25 4l7 21-4 3-5-2z" fill="#a9895a" /><path d="M22 3l6 2v25l-8-2z" fill="#e6f3f5" stroke="#9ab" strokeWidth=".6" /><path d="M12 3l14 1-7 24-17-5z" fill="#57b3bf" /><path d="M12 3l14 1-3 10-15 2z" fill="#a5dde2" /><path d="M12 3l14 1" stroke="#777" strokeWidth="2" strokeDasharray="1 1" /></g>,
  },
];

function Grip() {
  return (
    <svg width="9" height="32" aria-hidden="true">
      <path d="M1 1v30M4.500 1v30M8 1v30" stroke="#444" strokeWidth="1.500" strokeDasharray="1.500 2.500" />
    </svg>
  );
}

function Taskbar() {
  return (
    <footer className="flex h-10 flex-none items-center border-t border-[#4c4f54] bg-[linear-gradient(90deg,#8e8e8e,#a3a3a3_40%,#9a9a9a_75%,#6f6f6f_85%,#747474)] font-['Open_Sans','Noto_Sans',sans-serif]">
      <button aria-label="Démarrer" className="ml-2">
        <svg width="37" height="37" viewBox="0 0 37 37">
          <defs>
            <radialGradient id="orb" cx=".5" cy=".95" r=".9"><stop offset="0" stopColor="#4fd8f5" /><stop offset=".5" stopColor="#1e6a9e" /><stop offset="1" stopColor="#134268" /></radialGradient>
          </defs>
          <circle cx="18.500" cy="18.500" r="17.500" fill="url(#orb)" stroke="#2c3e4c" />
          <path d="M4 14Q8 2 19 2t14 12q-14 5-29 0z" fill="#fff" opacity=".28" />
          <path d="M11 10q4-3 8 0l-2 8q-4-2-8 0z" fill="#ee5a25" />
          <path d="M20 10q5 3 10 0l-2 8q-5 3-10 0z" fill="#8dc63f" />
          <path d="M9 19q4-2 8 0l-2 8q-4-3-8 0z" fill="#3a9be0" />
          <path d="M18 19q5 3 10 0l-2 8q-5 3-10 0z" fill="#fcc723" />
        </svg>
      </button>
      <span className="ml-3"><Grip /></span>
      <button aria-label="Lecteur multimédia" className="ml-[25px]">
        <svg width="28" height="26" viewBox="0 0 28 26"><path d="M6 2h20v22H6z" fill="#6fb0d8" /><path d="M3 2h20v23H3z" fill="#8cc4e6" stroke="#5b9cc6" /><path d="M1 2h19v23H1z" fill="#9fd2ef" stroke="#5b9cc6" /><circle cx="10.500" cy="13" r="8.500" fill="#f0791c" /><path d="M7.500 8l9 5-9 5z" fill="#fff" /></svg>
      </button>
      {TASKS.map((t) => (
        <button key={t.name} aria-label={t.name} className={"flex h-[38px] items-center justify-center rounded-xs border border-[#4e4e4e] inset-ring inset-ring-white/50 " + t.lit}>
          <svg width="34" height="32" viewBox="0 0 34 32">{t.art}</svg>
        </button>
      ))}
      <div className="ml-auto flex items-center text-[12px] text-white">
        <Grip />
        <span className="ml-2.5">FR</span>
        <svg width="9" height="5" className="ml-[17px]"><path d="M4.500 0L9 5H0z" fill="#eee" /></svg>
        <svg width="17" height="16" viewBox="0 0 17 16" className="ml-3"><path d="M2 0v15" stroke="#eee" strokeWidth="1.500" /><path d="M3 2q4-2 7 0l4 1v6q-5 1-7-1-2-1-4 0z" fill="#f4f4f4" /><circle cx="11" cy="11" r="5" fill="#d92a22" /><path d="M9 9l4 4M13 9l-4 4" stroke="#fff" strokeWidth="1.600" /></svg>
        <svg width="16" height="16" viewBox="0 0 16 16" className="ml-[7px]"><path d="M8 2H2.500v11.500H8M5 0v2" fill="none" stroke="#fff" strokeWidth="1.800" /><path d="M7 5h8v3q0 3-3 3v3h-2v-3Q7 11 7 8zM8.500 2h1.500v3H8.500zM12 2h1.500v3H12z" fill="#fff" /></svg>
        <svg width="16" height="14" className="ml-2"><path d="M0 10h2v2H0zM3 8h2v4H3zM6 6h2v6H6zM9 3h2v9H9zM12 0h3v12h-3z" fill="#fff" /></svg>
        <svg width="17" height="16" viewBox="0 0 17 16" className="ml-2"><path d="M1 5h3l5-4v13l-5-4H1z" fill="#eee" /><circle cx="11" cy="11" r="4.500" fill="#fff" stroke="#d92a22" strokeWidth="1.800" /><path d="M8 8l6 6" stroke="#d92a22" strokeWidth="1.800" /></svg>
        <time className="ml-4 w-[62px] text-center text-[11px] leading-[17px]">
          19:10
          <br />
          22/06/2010
        </time>
        <button aria-label="Afficher le bureau" className="ml-[9px] h-[39px] w-[14px] border border-[#4b4b4b] bg-linear-to-br from-[#b5b5b5] to-[#7c7c7c]" />
      </div>
    </footer>
  );
}

export default function App() {
  return (
    <div className="flex h-screen min-h-[480px] w-full flex-col overflow-hidden bg-[linear-gradient(90deg,#8c9bb0,#5f7288_40%,#8594a5_80%,#3f5575)] text-black">
      <div className="mb-[6px] flex min-h-0 flex-1 flex-col rounded-lg border border-[#1b1b1d] bg-[linear-gradient(#8b9097,#aeb6c0_40%,#7a8490_90%)] pb-[6px] font-['Open_Sans','Noto_Sans',sans-serif] inset-ring inset-ring-white/60">
        <TitleBar />
        <div className="mx-1.5 flex min-h-0 flex-1 flex-col overflow-hidden border border-t-0 border-[#333]">
          <Chrome />
          <div className="flex min-h-0 flex-1">
            <Page />
            <Scrollbar />
          </div>
        </div>
      </div>
      <Taskbar />
    </div>
  );
}
